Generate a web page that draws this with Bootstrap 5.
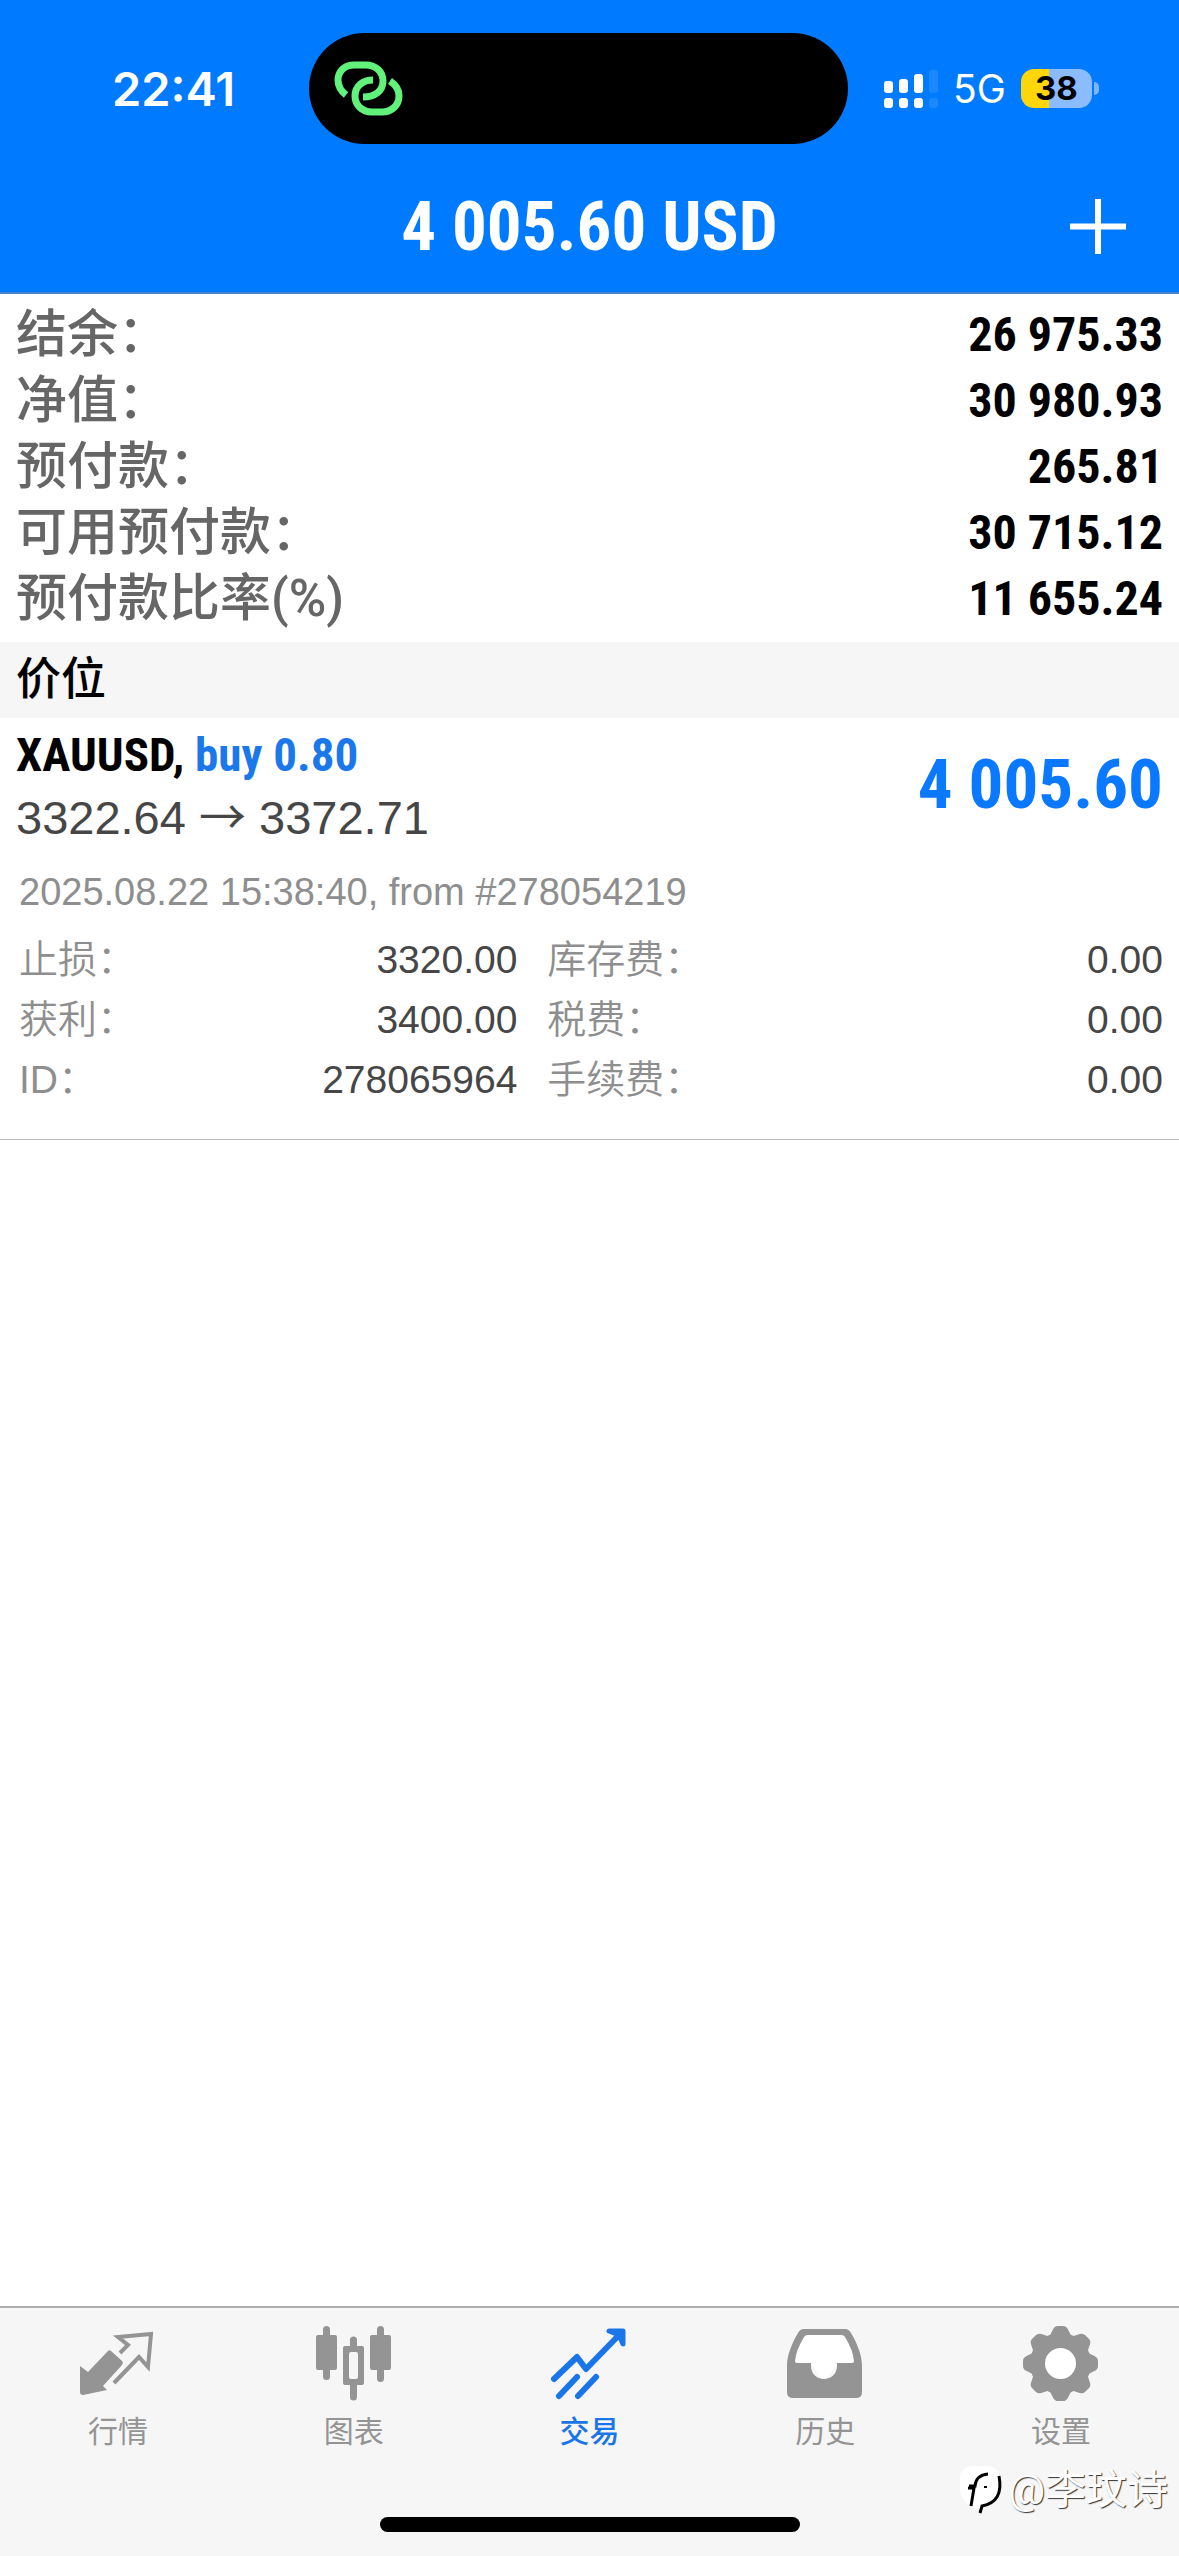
<!DOCTYPE html>
<html lang="zh-CN">
<head>
<meta charset="utf-8">
<meta name="viewport" content="width=device-width, initial-scale=1">
<title>交易</title>
<link href="https://cdn.jsdelivr.net/npm/bootstrap@5.3.0/dist/css/bootstrap.min.css" rel="stylesheet">
<style>
  :root { --brand: #007aff; --bar: #f6f6f6; --muted: #8e8e8e; --ink: #464646; }
  body { font-family: "Liberation Sans", "Noto Sans CJK SC", sans-serif; background: #fff; color: #000; }
  a { text-decoration: none; }
  .narrow { font-family: "Roboto Condensed", Roboto, "Liberation Sans", sans-serif; font-weight: 700; }
  .cjk { font-family: Roboto, "Noto Sans CJK SC", sans-serif; }

  .top-bar { background: var(--brand); border-bottom: 2px solid #4a83cc; }
  .status-row { display: grid; grid-template-columns: 309fr 539fr 331fr; padding-top: 33px; height: 144px; }
  .clock { font: 600 47px/1 Inter, sans-serif; padding-left: 38px; }
  .island { background: #000; border-radius: 56px; padding-left: 25px; }
  .signals { padding-left: 36px; gap: 15px; }
  .network { font: 400 39px/1 Inter, sans-serif; }
  .battery { width: 71px; height: 39px; border-radius: 13px; font: 700 33px/39px Inter, sans-serif; color: #000;
    background: linear-gradient(90deg, #ffd60a 40%, #8bbcff 40%); }
  .battery::after { content: ""; position: absolute; left: 73px; top: 13px; width: 5px; height: 13px; border-radius: 0 8px 8px 0; background: #7db5ff; }
  .title-row { display: grid; grid-template-columns: 1fr auto 1fr; height: 148px; padding: 18px 50px 0; }
  .title-row h1, .profit { font-size: 69px; line-height: 80px; }
  .add { width: 76px; height: 76px; }

  .summary { padding: 8px 16px 10px; }
  .summary dt, .summary dd { line-height: 66px; }
  .summary dt { font-size: 51px; font-weight: 500; color: #666; }
  .summary dd { font-size: 48px; }
  .section-head { background: var(--bar); padding: 0 16px; font-size: 45px; font-weight: 500; line-height: 76px; }

  .deal { padding: 4px 16px 0; border-bottom: 1px solid #b8b8bb; }
  .symbol { font-size: 47px; line-height: 66px; }
  .side { color: #1a78ea; }
  .prices { font-size: 47px; line-height: 60px; color: var(--ink); }
  .arrow { font-family: "Noto Sans CJK SC", sans-serif; line-height: 1; }
  .profit { color: #0a78ff; }
  .opened { font-size: 38px; line-height: 60px; padding: 14px 3px 8px; color: var(--muted); }
  .facts { font-size: 39px; line-height: 60px; padding: 0 0 29px 3px; gap: 25px; }
  .facts > dl:first-child { width: 44%; padding-right: 5px; }
  .facts dt { font-weight: 350; color: var(--muted); }
  .facts dd { color: var(--ink); }

  .tab-bar { background: var(--bar); border-top: 2px solid #adadad; height: 250px; }
  .tab { color: #949494; padding-top: 16px; font-size: 30px; line-height: 44px; gap: 6px; }
  .tab.active { color: #1a76e8; font-weight: 500; }
  .tab svg { width: 80px; height: 80px; }
  .home-line { width: 420px; height: 15px; border-radius: 8px; background: #000; bottom: 24px; left: 50%; margin-left: -210px; }
  .credit { right: 11px; bottom: 38px; font-size: 41px; line-height: 56px; color: #fff; text-shadow: 1px 1px 1px #333; font-weight: 400; gap: 4px; }
</style>
</head>
<body class="d-flex flex-column min-vh-100">

<header class="top-bar text-white">
  <div class="status-row">
    <div class="clock d-flex align-items-center justify-content-center">22:41</div>
    <div class="island d-flex align-items-center">
      <svg width="70" height="56" viewBox="0 0 70 56" fill="none" stroke="#62f27c" stroke-width="7" aria-hidden="true">
        <path d="M12 34C7 30 4 25 4 19C4 10 11 4 20 4H32C42 4 49 11 49 20C49 30 41 36 29 36"/>
        <path d="M39 19C29 19 21 25 21 35C21 44 28 51 38 51H48C58 51 65 44 65 35C65 29 62 24 56 20"/>
      </svg>
    </div>
    <div class="signals d-flex align-items-center">
      <svg width="54" height="40" viewBox="0 0 54 40" fill="#fff" aria-hidden="true">
        <rect x="0" y="12" width="9" height="12" rx="3"/><rect x="15" y="10" width="9" height="14" rx="3"/><rect x="30" y="5" width="9" height="19" rx="3"/>
        <rect x="0" y="29" width="9" height="10" rx="3"/><rect x="15" y="29" width="9" height="10" rx="3"/><rect x="30" y="29" width="9" height="10" rx="3"/>
        <g fill="#1c88ff"><rect x="45" y="1" width="9" height="23" rx="3"/><rect x="45" y="29" width="9" height="10" rx="3"/></g>
      </svg>
      <span class="network">5G</span>
      <span class="battery position-relative text-center">38</span>
    </div>
  </div>
  <div class="title-row align-items-center">
    <span></span>
    <h1 class="narrow m-0">4 005.60 USD</h1>
    <button type="button" class="add btn p-0 border-0 text-white ms-auto d-flex" aria-label="新订单">
      <svg width="76" height="76" viewBox="0 0 76 76" stroke="currentColor" stroke-width="6" aria-hidden="true"><path d="M45 10V65M17 37.500H73"/></svg>
    </button>
  </div>
</header>

<main class="flex-grow-1">
  <dl class="summary m-0">
    <div class="d-flex justify-content-between"><dt class="cjk">结余：</dt><dd class="narrow m-0">26 975.33</dd></div>
    <div class="d-flex justify-content-between"><dt class="cjk">净值：</dt><dd class="narrow m-0">30 980.93</dd></div>
    <div class="d-flex justify-content-between"><dt class="cjk">预付款：</dt><dd class="narrow m-0">265.81</dd></div>
    <div class="d-flex justify-content-between"><dt class="cjk">可用预付款：</dt><dd class="narrow m-0">30 715.12</dd></div>
    <div class="d-flex justify-content-between"><dt class="cjk">预付款比率(%)</dt><dd class="narrow m-0">11 655.24</dd></div>
  </dl>

  <h2 class="section-head cjk m-0">价位</h2>

  <article class="deal">
    <div class="d-flex justify-content-between align-items-center">
      <div>
        <div class="symbol narrow">XAUUSD, <span class="side">buy 0.80</span></div>
        <div class="prices">3322.64 <span class="arrow">→</span> 3372.71</div>
      </div>
      <div class="profit narrow">4 005.60</div>
    </div>
    <div class="opened">2025.08.22 15:38:40, from #278054219</div>
    <div class="facts d-flex">
      <dl class="m-0">
        <div class="d-flex justify-content-between"><dt>止损：</dt><dd class="m-0">3320.00</dd></div>
        <div class="d-flex justify-content-between"><dt>获利：</dt><dd class="m-0">3400.00</dd></div>
        <div class="d-flex justify-content-between"><dt>ID：</dt><dd class="m-0">278065964</dd></div>
      </dl>
      <dl class="m-0 flex-grow-1">
        <div class="d-flex justify-content-between"><dt>库存费：</dt><dd class="m-0">0.00</dd></div>
        <div class="d-flex justify-content-between"><dt>税费：</dt><dd class="m-0">0.00</dd></div>
        <div class="d-flex justify-content-between"><dt>手续费：</dt><dd class="m-0">0.00</dd></div>
      </dl>
    </div>
  </article>
</main>

<footer class="tab-bar position-relative">
  <nav class="d-flex cjk">
    <a href="#" class="tab flex-fill w-100 d-flex flex-column align-items-center">
      <svg viewBox="1 0 80 80" aria-hidden="true"><path d="M43 29L51 21L41 13L74 10L71 43L62 33L37 59" fill="none" stroke="currentColor" stroke-width="4"/><path d="M3 42L11 48L30 28Q32 25 34 27L44 36Q47 38 45 41L26 62L30 66L6 71Q3 71 3 68Z" fill="currentColor"/></svg>
      <span>行情</span>
    </a>
    <a href="#" class="tab flex-fill w-100 d-flex flex-column align-items-center">
      <svg viewBox="1 0 80 80" fill="currentColor" aria-hidden="true"><rect x="3" y="11" width="21" height="35" rx="2"/><rect x="10" y="2" width="7" height="54" rx="3.5"/><rect x="57" y="11" width="21" height="35" rx="2"/><rect x="64" y="2" width="7" height="56" rx="3.5"/><path d="M44 22H49Q51 22 51 24V59Q51 61 49 61H44V73A3.500 3.500 0 0 1 37 73V61H32Q30 61 30 59V24Q30 22 32 22H37V16A3.500 3.500 0 0 1 44 16ZM38 28Q36 28 36 30V53Q36 55 38 55H43Q45 55 45 53V30Q45 28 43 28Z" fill-rule="evenodd"/></svg>
      <span>图表</span>
    </a>
    <a href="#" class="tab active flex-fill w-100 d-flex flex-column align-items-center" aria-current="page">
      <svg viewBox="1 0 80 80" fill="none" stroke="currentColor" stroke-width="6" stroke-linecap="round" stroke-linejoin="round" aria-hidden="true"><path d="M6 55L29 33L38 45L73 9M11 72L29 53M30 72L48 53"/><path d="M61 7H75V20L71 11Z" fill="currentColor" stroke-width="5"/></svg>
      <span>交易</span>
    </a>
    <a href="#" class="tab flex-fill w-100 d-flex flex-column align-items-center">
      <svg viewBox="1 0 80 80" aria-hidden="true"><path fill="#fff" d="M22 8H60L74 40H54L40 58L27 40H8Z"/><path fill="currentColor" fill-rule="evenodd" d="M20 5H61Q65 5 67 9C73 19 78 31 78 42V68Q78 74 72 74H9Q3 74 3 68V42C3 31 8 19 14 9Q16 5 20 5ZM24 11Q21 11 20 13Q12 26 11 37Q11 39 13 39H27V42C27 50 33 55 40 55S53 50 53 42V39H68Q70 39 70 37Q69 26 61 13Q60 11 57 11Z"/></svg>
      <span>历史</span>
    </a>
    <a href="#" class="tab flex-fill w-100 d-flex flex-column align-items-center">
      <svg viewBox="1 0 80 80" aria-hidden="true">
        <defs><path id="tooth" d="M35 6Q36 4 38 4H43Q45 4 46 6L51 16H30Z"/></defs>
        <circle cx="40.500" cy="39.500" r="20" fill="#fff"/>
        <g fill="currentColor" stroke="currentColor" stroke-width="4" stroke-linejoin="round">
          <use href="#tooth"/><use href="#tooth" transform="rotate(45 40.500 39.500)"/><use href="#tooth" transform="rotate(90 40.500 39.500)"/><use href="#tooth" transform="rotate(135 40.500 39.500)"/><use href="#tooth" transform="rotate(180 40.500 39.500)"/><use href="#tooth" transform="rotate(225 40.500 39.500)"/><use href="#tooth" transform="rotate(270 40.500 39.500)"/><use href="#tooth" transform="rotate(315 40.500 39.500)"/>
        </g>
        <circle cx="40.500" cy="39.500" r="23" fill="none" stroke="currentColor" stroke-width="15"/>
      </svg>
      <span>设置</span>
    </a>
  </nav>
  <div class="credit cjk position-absolute d-flex align-items-center">
    <svg width="46" height="52" viewBox="0 0 46 52" aria-hidden="true">
      <path d="M16 2H28Q42 2 42 18V24Q42 40 24 43V47Q3 40 2 26V16Q2 2 16 2Z" fill="#fff"/>
      <path d="M13 42L16 24H10M11 22H17Q18 11 30 10" fill="none" stroke="#000" stroke-width="3"/>
      <path d="M41 12Q46 38 24 42L22 49" fill="none" stroke="#000" stroke-width="3"/>
      <path d="M26 23H29" stroke="#000" stroke-width="2"/>
    </svg>
    <span>@李玟诗</span>
  </div>
  <div class="home-line position-absolute"></div>
</footer>

<script src="https://cdn.jsdelivr.net/npm/bootstrap@5.3.0/dist/js/bootstrap.bundle.min.js"></script>
</body>
</html>
